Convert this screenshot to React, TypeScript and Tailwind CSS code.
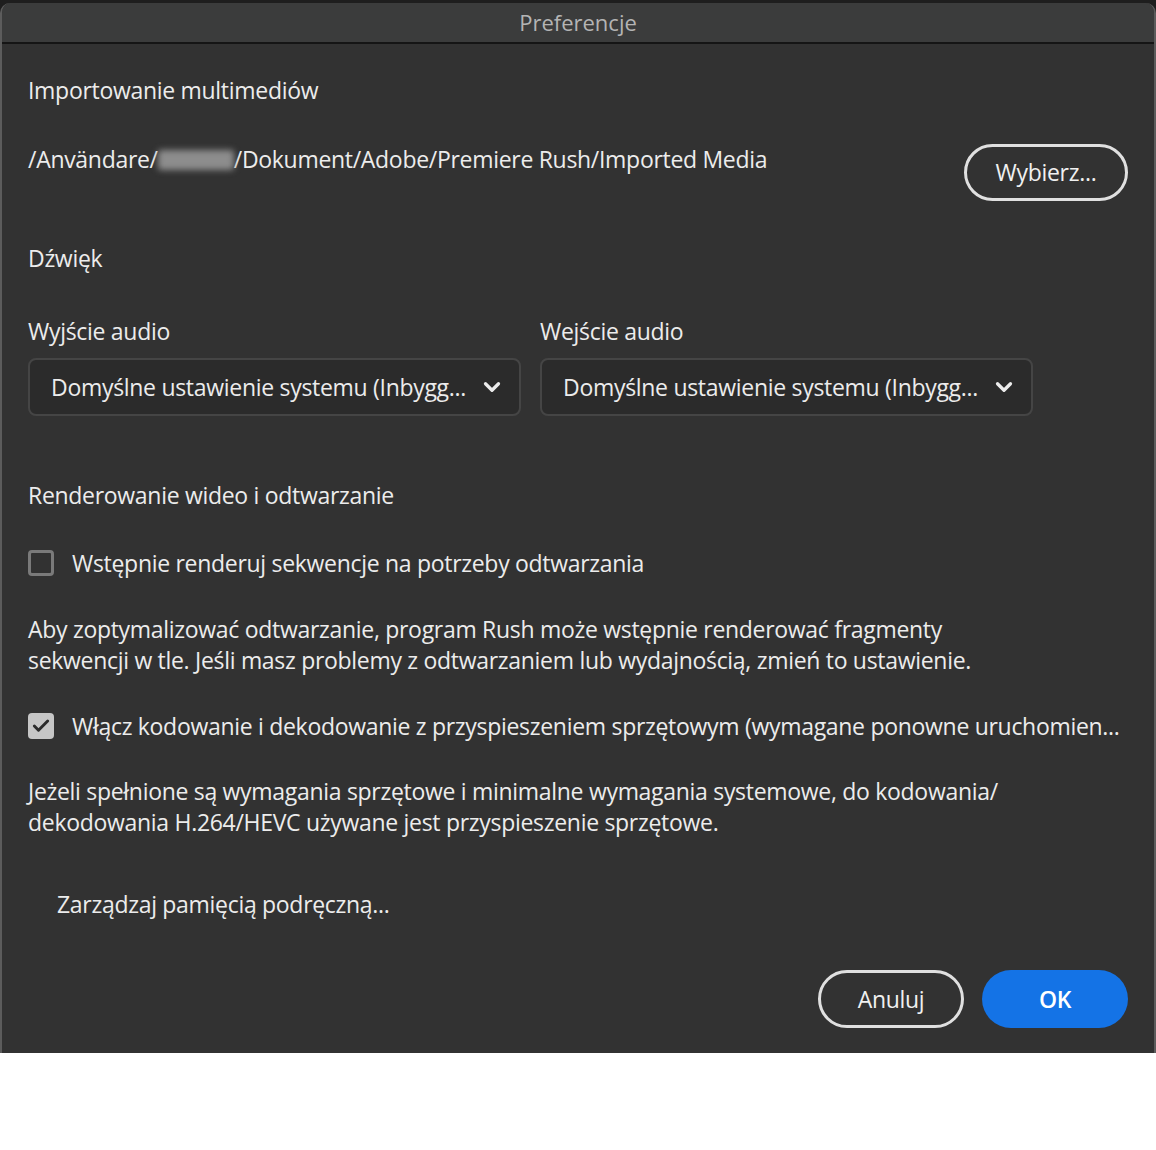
import { ChevronDown, Check } from "lucide-react";

const font = { fontFamily: "'Open Sans', 'Noto Sans', sans-serif" };

function Select({ value }: { value: string }) {
  return (
    <div className="flex h-[58px] w-[493px] items-center justify-between rounded-[8px] border-2 border-[#454545] bg-[#2b2b2b] pl-[21px] pr-[14px]">
      <span className="whitespace-nowrap text-[23px] tracking-[-0.3px] text-[#ececec]">{value}</span>
      <ChevronDown className="h-[26px] w-[26px] shrink-0 text-[#ececec]" strokeWidth={3} />
    </div>
  );
}

function CheckRow({ checked, label }: { checked?: boolean; label: string }) {
  return (
    <div className="flex items-center gap-[18px]">
      {checked ? (
        <div className="flex h-[26px] w-[26px] shrink-0 items-center justify-center rounded-[4px] bg-[#c6c6c6]">
          <Check className="h-[20px] w-[20px] text-[#2b2b2b]" strokeWidth={3.5} />
        </div>
      ) : (
        <div className="h-[26px] w-[26px] shrink-0 rounded-[4px] border-[3px] border-[#7a7a7a]" />
      )}
      <span className="whitespace-nowrap text-[23px] tracking-[-0.3px] text-[#ececec]">{label}</span>
    </div>
  );
}

export default function App() {
  return (
    <div className="h-[1150px] w-[1156px] bg-white" style={font}>
      <div className="bg-[#1e1e1e] pt-[3px]">
        <div className="flex h-[1050px] flex-col overflow-hidden rounded-t-[10px] border-x-2 border-[#5c5c5c] bg-[#323232]">
          {/* title bar */}
          <div className="flex h-[41px] shrink-0 items-center justify-center border-b-2 border-[#151515] bg-[#3b3c3c]">
            <span className="text-[22px] text-[#b4b4b4]">Preferencje</span>
          </div>

          <div className="flex flex-1 flex-col px-[26px] text-[23px] tracking-[-0.3px] text-[#ececec]">
            <h2 className="mt-[31px] leading-[30px]">Importowanie multimediów</h2>

            <div className="mt-[39px] flex items-start justify-between">
              <p className="leading-[30px]">
                /Användare/
                <span className="inline-block h-[20px] w-[76px] translate-y-[2px] rounded-[3px] bg-[#8d8d8d] blur-[3px]" />
                /Dokument/Adobe/Premiere Rush/Imported Media
              </p>
              <button className="h-[57px] w-[164px] rounded-full border-[3px] border-[#e0e0e0] text-[#f0f0f0]">
                Wybierz...
              </button>
            </div>

            <h2 className="mt-[42px] leading-[30px]">Dźwięk</h2>

            <div className="mt-[43px] flex gap-[19px]">
              <div className="flex flex-col gap-[12px]">
                <span className="leading-[30px]">Wyjście audio</span>
                <Select value="Domyślne ustawienie systemu (Inbygg..." />
              </div>
              <div className="flex flex-col gap-[12px]">
                <span className="leading-[30px]">Wejście audio</span>
                <Select value="Domyślne ustawienie systemu (Inbygg..." />
              </div>
            </div>

            <h2 className="mt-[64px] leading-[30px]">Renderowanie wideo i odtwarzanie</h2>

            <div className="mt-[36px]">
              <CheckRow label="Wstępnie renderuj sekwencje na potrzeby odtwarzania" />
            </div>

            <p className="mt-[33px] leading-[31px]">
              Aby zoptymalizować odtwarzanie, program Rush może wstępnie renderować fragmenty
              <br />
              sekwencji w tle. Jeśli masz problemy z odtwarzaniem lub wydajnością, zmień to ustawienie.
            </p>

            <div className="mt-[33px]">
              <CheckRow checked label="Włącz kodowanie i dekodowanie z przyspieszeniem sprzętowym (wymagane ponowne uruchomien..." />
            </div>

            <p className="mt-[33px] leading-[31px]">
              Jeżeli spełnione są wymagania sprzętowe i minimalne wymagania systemowe, do kodowania/
              <br />
              dekodowania H.264/HEVC używane jest przyspieszenie sprzętowe.
            </p>

            <button className="mt-[51px] self-start pl-[29px] leading-[30px] text-[#ececec]">
              Zarządzaj pamięcią podręczną...
            </button>

            <div className="mt-[51px] flex justify-end gap-[18px]">
              <button className="h-[58px] w-[146px] rounded-full border-[3px] border-[#e0e0e0] text-[#f0f0f0]">
                Anuluj
              </button>
              <button className="h-[58px] w-[146px] rounded-full bg-[#1473e6] font-semibold text-white">
                OK
              </button>
            </div>
          </div>
        </div>
      </div>
    </div>
  );
}
